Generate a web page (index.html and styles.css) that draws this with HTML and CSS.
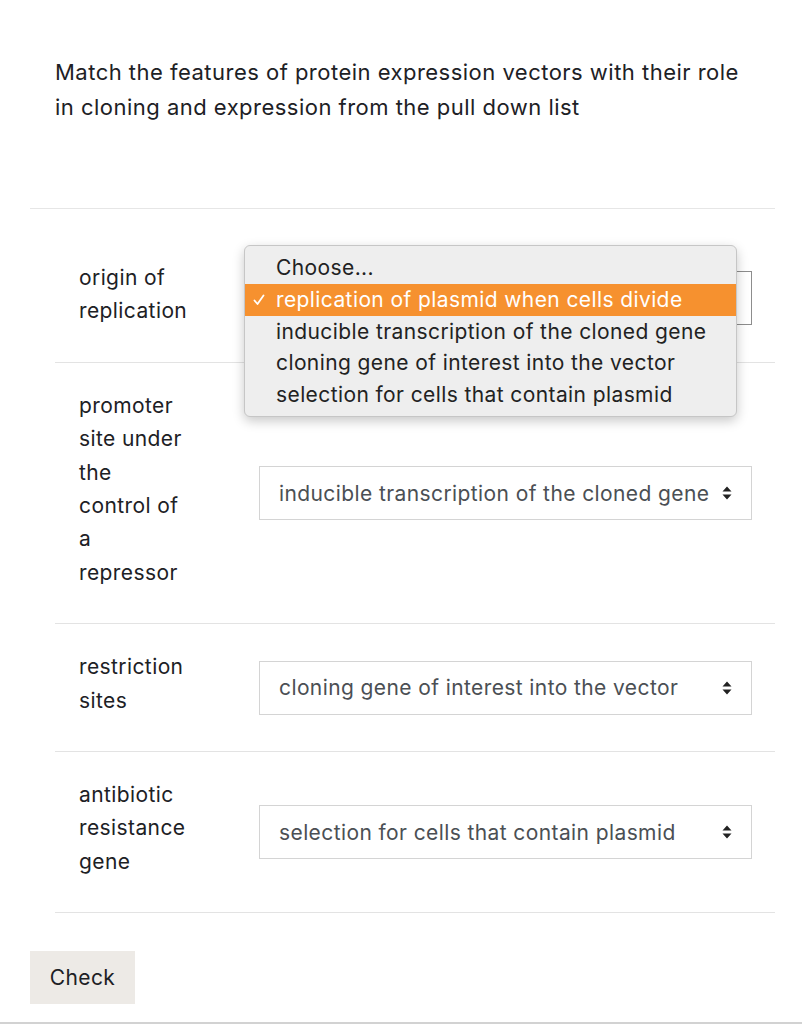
FILE: index.html
```html
<!DOCTYPE html>
<html lang="en">
<head>
    <meta charset="UTF-8">
    <meta name="viewport" content="width=device-width, initial-scale=1.0">
    <title>Match question</title>
    <link rel="stylesheet" href="styles.css">
</head>
<body>
    <div class="container">
        <div class="question-text">
            Match the features of protein expression vectors with their role in cloning and expression from the pull down list
        </div>

        <div class="answers">
            <div class="match-row">
                <div class="label">origin of replication</div>
                <div class="control">
                    <!-- open select: its text is covered by the popup list -->
                    <div class="select focused"></div>
                    <ul class="popup">
                        <li>Choose...</li>
                        <li class="picked">
                            <svg class="tick" width="12" height="12" viewBox="0 0 12 12"><path d="M1.5 6.5 L4.5 10 L10.5 1.5" fill="none" stroke="#fff" stroke-width="1.8" stroke-linecap="round" stroke-linejoin="round"/></svg>
                            replication of plasmid when cells divide
                        </li>
                        <li>inducible transcription of the cloned gene</li>
                        <li>cloning gene of interest into the vector</li>
                        <li>selection for cells that contain plasmid</li>
                    </ul>
                </div>
            </div>
            <div class="match-row">
                <div class="label">promoter site under the control of a repressor</div>
                <div class="control">
                    <div class="select">
                        <span class="select-text">inducible transcription of the cloned gene</span>
                        <svg class="arrows" width="10" height="14" viewBox="0 0 10 14"><path d="M5 0.5 L9.5 5.5 H0.5 Z M5 13.5 L9.5 8.5 H0.5 Z" fill="#222"/></svg>
                    </div>
                </div>
            </div>
            <div class="match-row">
                <div class="label">restriction sites</div>
                <div class="control">
                    <div class="select">
                        <span class="select-text">cloning gene of interest into the vector</span>
                        <svg class="arrows" width="10" height="14" viewBox="0 0 10 14"><path d="M5 0.5 L9.5 5.5 H0.5 Z M5 13.5 L9.5 8.5 H0.5 Z" fill="#222"/></svg>
                    </div>
                </div>
            </div>
            <div class="match-row">
                <div class="label">antibiotic resistance gene</div>
                <div class="control">
                    <div class="select">
                        <span class="select-text">selection for cells that contain plasmid</span>
                        <svg class="arrows" width="10" height="14" viewBox="0 0 10 14"><path d="M5 0.5 L9.5 5.5 H0.5 Z M5 13.5 L9.5 8.5 H0.5 Z" fill="#222"/></svg>
                    </div>
                </div>
            </div>
        </div>

        <button class="check-btn">Check</button>
    </div>
    <div class="page-end"></div>
</body>
</html>
```

FILE: styles.css
```css
body {
    font-family: 'Inter', 'Liberation Sans', sans-serif;
    background-color: #fff;
    color: #1d2125;
    margin: 0;
}

.container {
    padding: 55px 27px 0 30px;
}

.question-text {
    font-size: 22px;
    line-height: 35px;
    letter-spacing: 0.48px;
    padding: 0 30px 0 25px;
}

.answers {
    margin-top: 83px;
    border-top: 1px solid #e6e6e6;
    padding: 26px 0 0 25px;
}

.match-row {
    display: flex;
    align-items: center;
    padding: 30px 0;
    border-bottom: 1px solid #e3e3e3;
}

.label {
    width: 110px;
    padding: 0 70px 4px 24px;
    margin-top: -4px;
    font-size: 21px;
    letter-spacing: 0.4px;
    line-height: 33.4px;
}

.control {
    position: relative;
    flex: 1;
    padding-right: 23px;
}

.select {
    height: 54px;
    box-sizing: border-box;
    border: 1px solid #d4d4d4;
    display: flex;
    align-items: center;
    justify-content: space-between;
    padding: 0 19px 0 19px;
    font-size: 21px;
    letter-spacing: 0.4px;
    color: #4b4f54;
}

.select.focused {
    border-color: #8d8d8d;
}

.popup {
    position: absolute;
    top: -26px;
    left: -15px;
    width: 493px;
    box-sizing: border-box;
    margin: 0;
    padding: 6px 0;
    list-style: none;
    background-color: #eeeeee;
    border: 1px solid #c6c6c6;
    border-radius: 6px;
    box-shadow: 0 4px 12px rgba(0, 0, 0, 0.22);
    font-size: 21px;
    letter-spacing: 0.4px;
    color: #222;
}

.popup li {
    height: 31.6px;
    line-height: 31px;
    padding-left: 31px;
    position: relative;
}

.popup li.picked {
    background-color: #f6912f;
    color: #fff;
}

.tick {
    position: absolute;
    left: 8px;
    top: 10px;
}

.check-btn {
    margin-top: 38px;
    width: 105px;
    height: 53px;
    border: none;
    background-color: #edeae6;
    font-family: inherit;
    font-size: 21px;
    letter-spacing: 0.4px;
    color: #1d2125;
}

.page-end {
    margin-top: 18px;
    height: 3px;
    background-color: #d2d2d2;
}
```
